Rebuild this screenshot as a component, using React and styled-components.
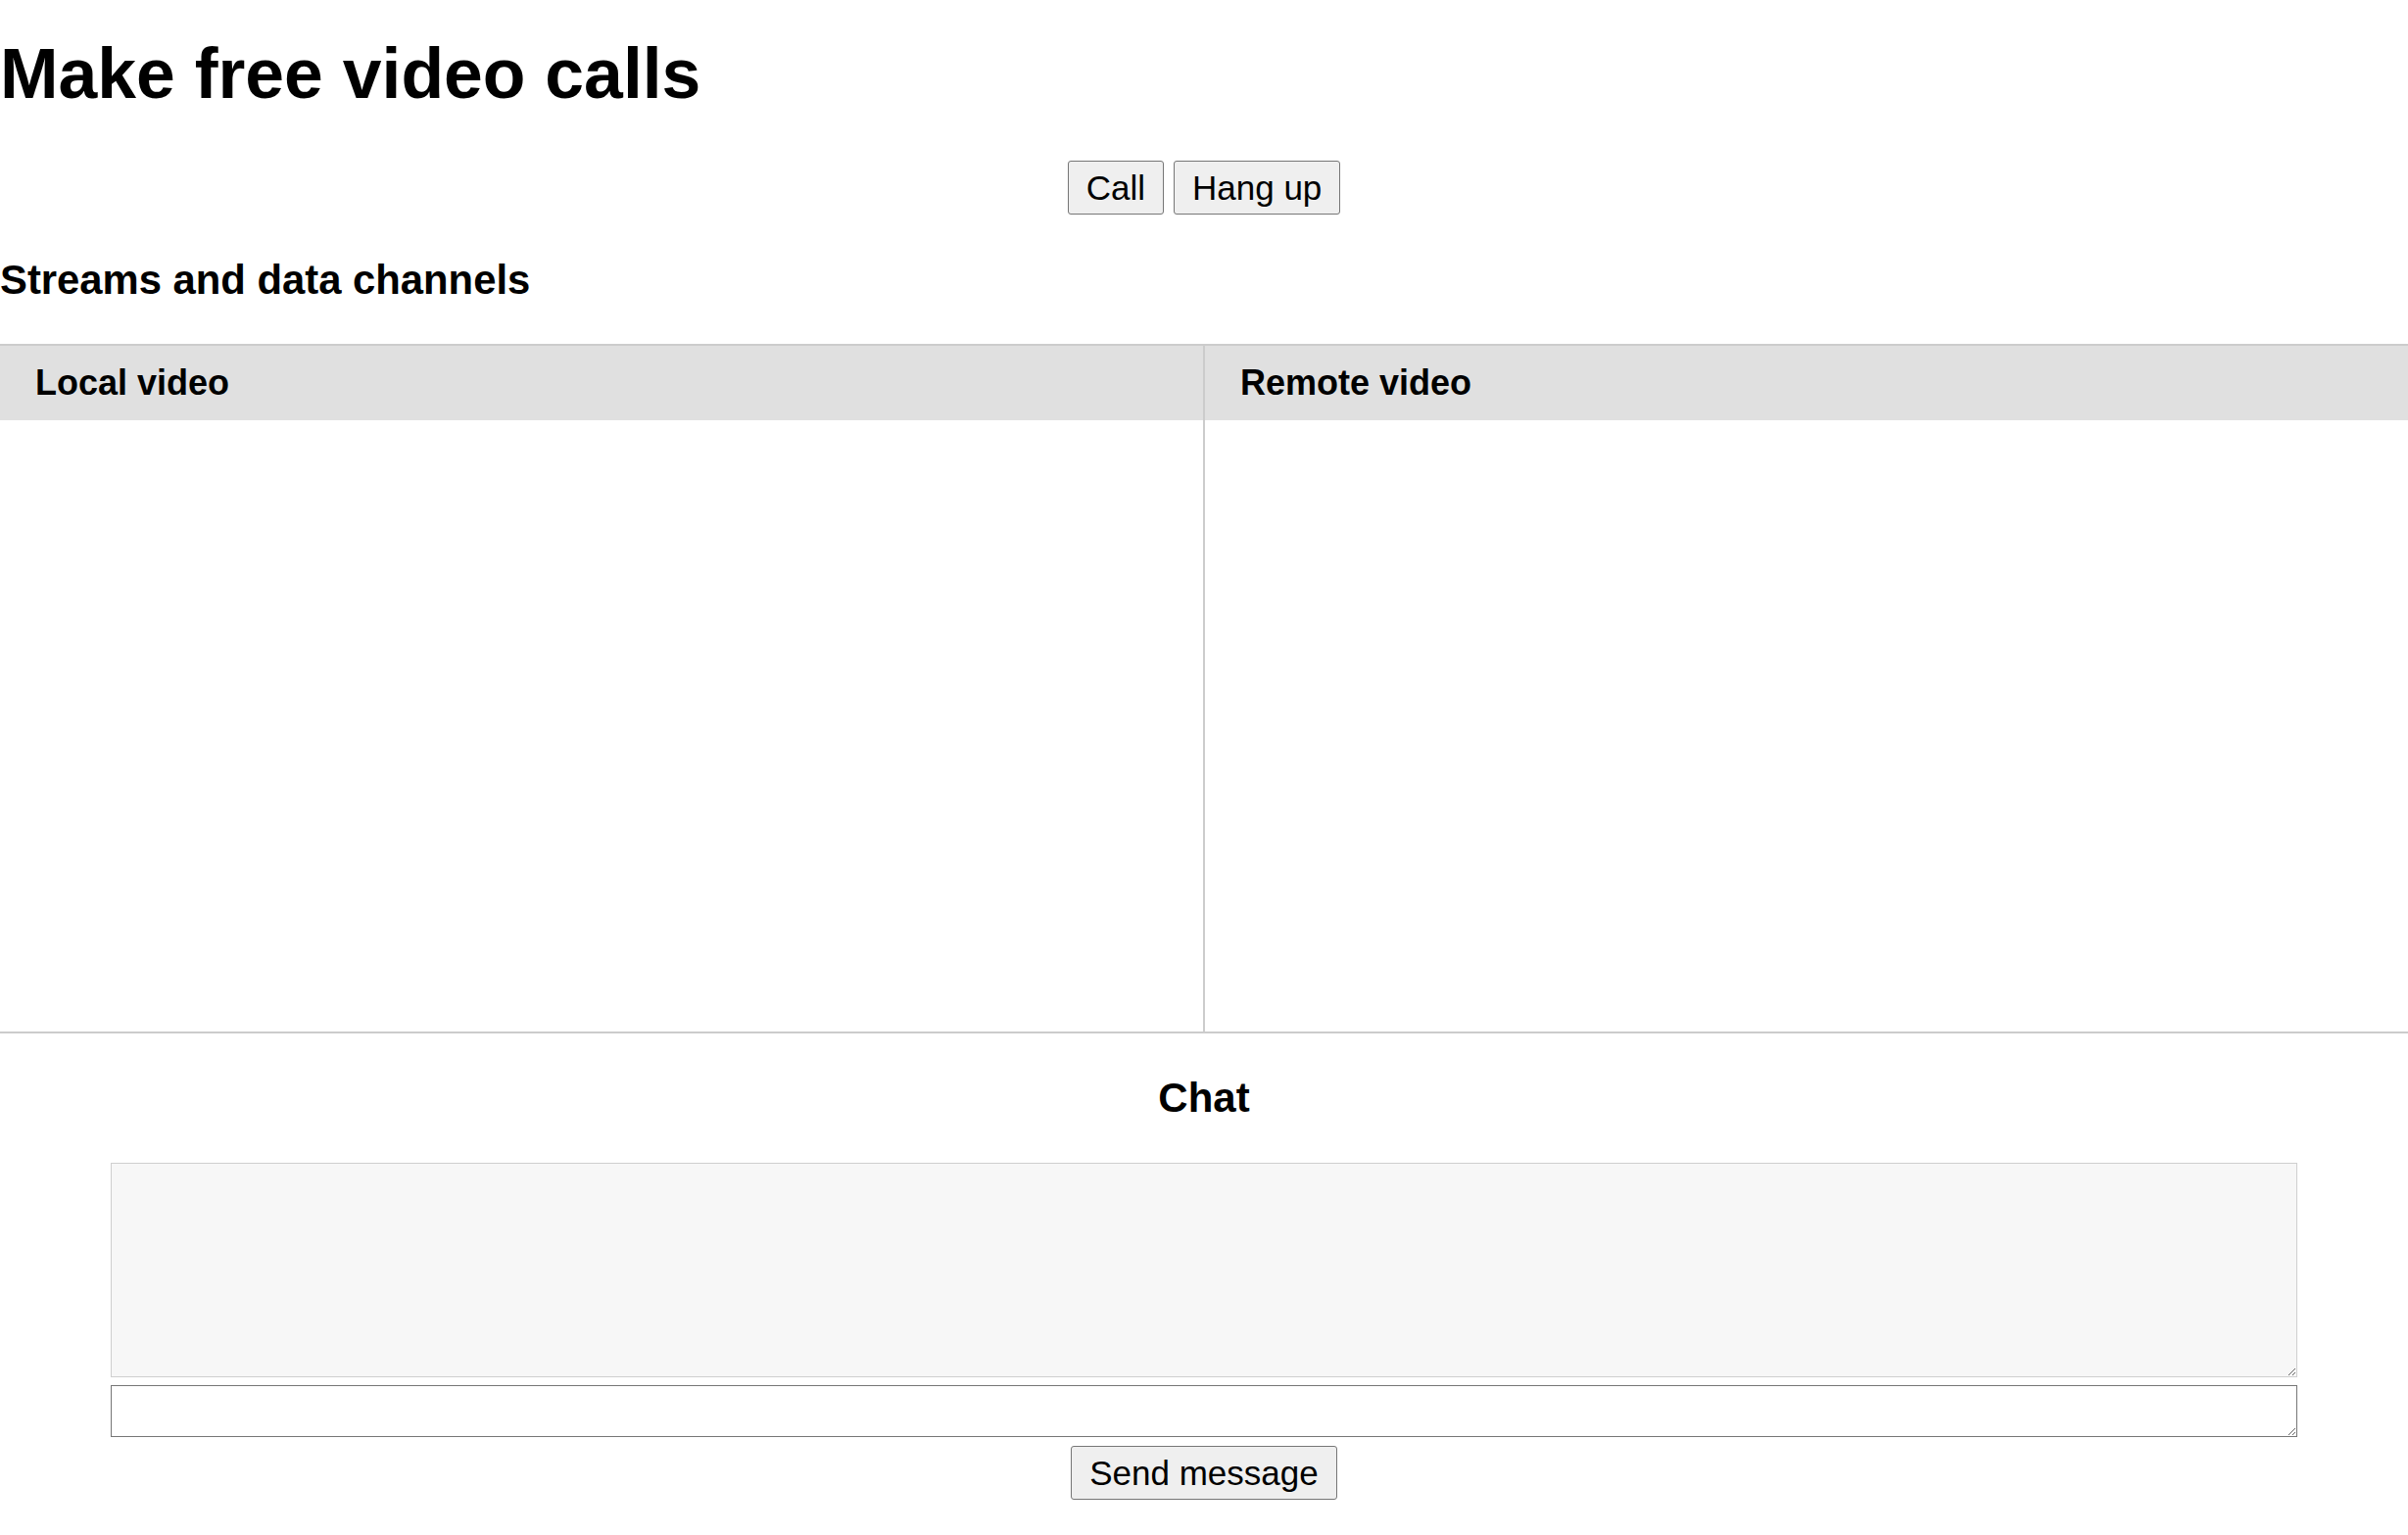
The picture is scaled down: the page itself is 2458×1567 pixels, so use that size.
import React from "react";
import styled, { createGlobalStyle } from "styled-components";

const GlobalStyle = createGlobalStyle`
  html, body {
    margin: 0;
    padding: 0;
    background: #fff;
    color: #000;
    font-family: "Liberation Sans", Arial, sans-serif;
  }
  * { box-sizing: border-box; }
`;

const Page = styled.div`
  display: flex;
  flex-direction: column;
  width: 100%;
`;

const Title = styled.h1`
  margin: 39px 0 0;
  font-size: 71.5px;
  line-height: 72px;
  font-weight: 700;
`;

const ButtonRow = styled.div`
  display: flex;
  justify-content: center;
  gap: 10px;
  margin-top: ${(p) => p.$top || 0}px;
`;

const Button = styled.button`
  font-family: "Liberation Sans", Arial, sans-serif;
  font-size: 35px;
  line-height: 39px;
  padding: 7px 18px;
  background: #efefef;
  color: #000;
  border: 1px solid #767676;
  border-radius: 3px;
  cursor: pointer;
`;

const SubTitle = styled.h2`
  margin: 46px 0 0;
  font-size: 41.8px;
  line-height: 42px;
  font-weight: 700;
`;

const VideoTable = styled.div`
  margin-top: 44px;
  display: grid;
  grid-template-columns: 1fr 2px 1fr;
  grid-template-rows: 76px 624px;
  border-top: 2px solid #ccc;
  border-bottom: 2px solid #ccc;
`;

const HeadCell = styled.div`
  grid-column: ${(p) => p.$col};
  background: #e0e0e0;
  padding-left: 36px;
  font-size: 36px;
  line-height: 76px;
  font-weight: 700;
`;

const Divider = styled.div`
  grid-row: 1 / span 2;
  grid-column: 2;
  background: #ccc;
`;

const VideoCell = styled.div`
  grid-column: ${(p) => p.$col};
  background: #fff;
`;

const ChatTitle = styled.h3`
  margin: 45px 0 0;
  text-align: center;
  font-size: 42px;
  line-height: 42px;
  font-weight: 700;
`;

const ChatBox = styled.div`
  display: flex;
  flex-direction: column;
  gap: 8px;
  padding: 0 113px;
  margin-top: 45px;
`;

const ChatLog = styled.textarea`
  display: block;
  width: 100%;
  height: 219px;
  background: #f7f7f7;
  border: 1px solid #cfcfcf;
  font-family: "Liberation Sans", Arial, sans-serif;
  font-size: 24px;
  margin: 0;
`;

const MessageInput = styled.textarea`
  display: block;
  width: 100%;
  height: 53px;
  background: #fff;
  border: 1px solid #767676;
  font-family: "Liberation Sans", Arial, sans-serif;
  font-size: 24px;
  margin: 0;
`;

export default function App() {
  return (
    <Page>
      <GlobalStyle />
      <Title>Make free video calls</Title>
      <ButtonRow $top={53}>
        <Button>Call</Button>
        <Button>Hang up</Button>
      </ButtonRow>
      <SubTitle>Streams and data channels</SubTitle>
      <VideoTable>
        <HeadCell $col={1}>Local video</HeadCell>
        <Divider />
        <HeadCell $col={3}>Remote video</HeadCell>
        <VideoCell $col={1} />
        <VideoCell $col={3} />
      </VideoTable>
      <ChatTitle>Chat</ChatTitle>
      <ChatBox>
        <ChatLog readOnly />
        <MessageInput />
      </ChatBox>
      <ButtonRow $top={9}>
        <Button>Send message</Button>
      </ButtonRow>
    </Page>
  );
}
